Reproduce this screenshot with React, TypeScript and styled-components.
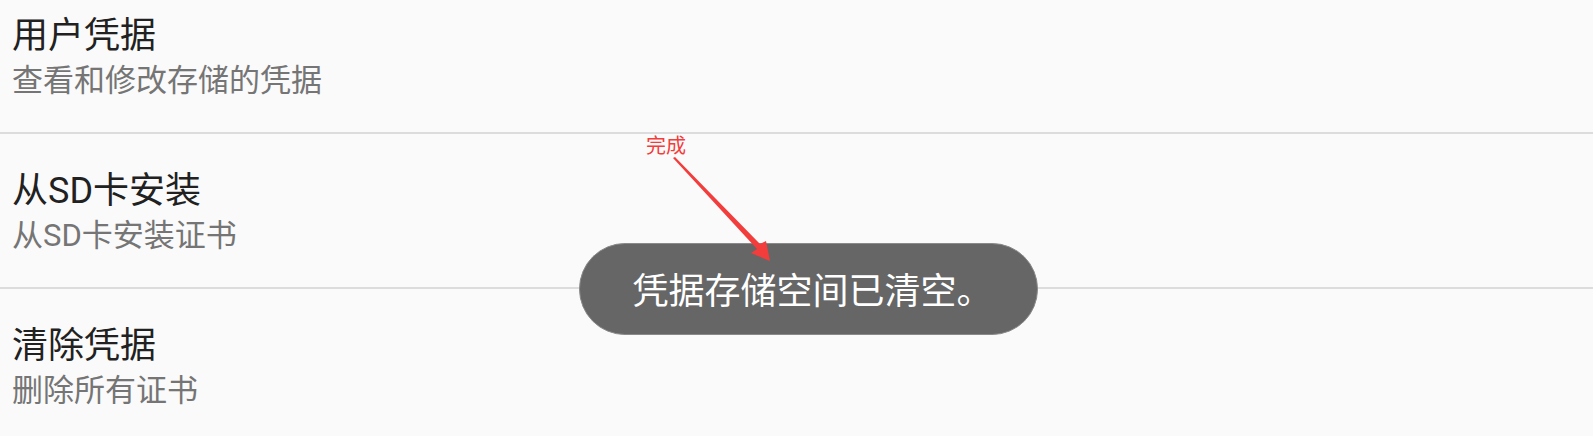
import React from 'react';
import styled, {createGlobalStyle} from "styled-components";

const GlobalStyle = createGlobalStyle`
    html, body {
        margin: 0;
        padding: 0;
        background: #fafafa;
        overflow: hidden;
    }
    body {
        font-family: "Roboto", "Noto Sans CJK SC", sans-serif;
    }
`

const items = [
    {title: '用户凭据', summary: '查看和修改存储的凭据'},
    {title: '从SD卡安装', summary: '从SD卡安装证书'},
    {title: '清除凭据', summary: '删除所有证书'},
]

export default function App() {
    return (
        <Screen>
            <GlobalStyle/>
            <List>
                {items.map((item) => (
                    <Row key={item.title}>
                        <Title>{item.title}</Title>
                        <Summary>{item.summary}</Summary>
                    </Row>
                ))}
            </List>

            <Toast>凭据存储空间已清空。</Toast>

            <Note>完成</Note>
            <Arrow width="1593" height="436" viewBox="0 0 1593 436">
                <path d="M673 158 L675 157 L760 244 L766 241 L770 261 L751 253 L757 249 Z" fill="#f33c3c"/>
            </Arrow>
        </Screen>
    );
}

const Screen = styled.div`
    position: relative;
    width: 1593px;
    height: 436px;
    overflow: hidden;
    background: #fafafa;
`
const List = styled.div`
    display: flex;
    flex-direction: column;
    margin-top: -21px;
`
const Row = styled.div`
    height: 155px;
    box-sizing: border-box;
    padding: 34px 0 0 12px;
    border-bottom: 2px solid #dcdcdc;
    display: flex;
    flex-direction: column;
`
const Title = styled.div`
    font-size: 36px;
    line-height: 46px;
    color: #212121;
`
const Summary = styled.div`
    font-size: 31px;
    line-height: 44px;
    color: #757575;
`
const Toast = styled.div`
    position: absolute;
    left: 579px;
    top: 243px;
    width: 459px;
    height: 92px;
    box-sizing: border-box;
    border-radius: 46px;
    background: #666666;
    border: 1px solid #8a8a8a;
    color: #ffffff;
    font-size: 36px;
    display: flex;
    align-items: center;
    justify-content: center;
    padding: 0 0 2px 8px;
`
const Note = styled.div`
    position: absolute;
    left: 646px;
    top: 134px;
    font-size: 20px;
    line-height: 24px;
    color: #f33c3c;
`
const Arrow = styled.svg`
    position: absolute;
    left: 0;
    top: 0;
    pointer-events: none;
`
